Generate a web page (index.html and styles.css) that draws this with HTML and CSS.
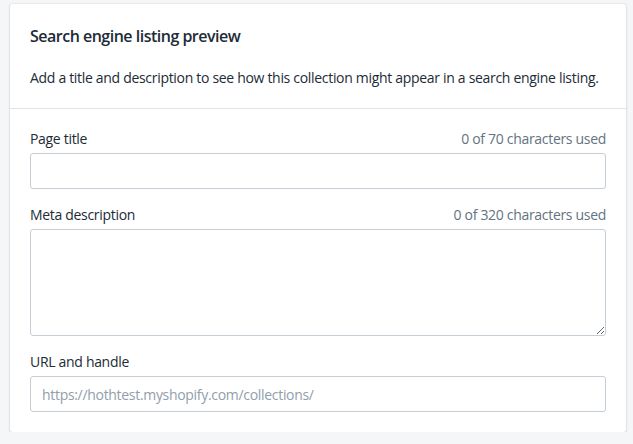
FILE: index.html
```html
<!DOCTYPE html>
<html lang="en">
<head>
<meta charset="utf-8">
<title>Search engine listing preview</title>
<link rel="stylesheet" href="styles.css">
</head>
<body>
<div class="card">
  <div class="card-section intro">
    <h2 class="card-title">Search engine listing preview</h2>
    <p class="card-text">Add a title and description to see how this collection might appear in a search engine listing.</p>
  </div>
  <div class="card-section form">
    <div class="field">
      <div class="label-row"><label class="label" for="t">Page title</label><span class="count">0 of 70 characters used</span></div>
      <input class="input" id="t" type="text">
    </div>
    <div class="field">
      <div class="label-row"><label class="label" for="d">Meta description</label><span class="count">0 of 320 characters used</span></div>
      <textarea class="input textarea" id="d"></textarea>
    </div>
    <div class="field">
      <div class="label-row"><label class="label" for="u">URL and handle</label></div>
      <input class="input" id="u" type="text" placeholder="https://hothtest.myshopify.com/collections/">
    </div>
  </div>
</div>
</body>
</html>
```
FILE: styles.css
```css
html, body {
  margin: 0;
  padding: 0;
  background: #f4f6f8;
}
body {
  padding: 4px 7px 0 10px;
  font-family: "Open Sans", "Noto Sans", sans-serif;
  color: #212b36;
  font-size: 14px;
  line-height: 20px;
  letter-spacing: -0.31px;
}
.card {
  background: #fff;
  border-radius: 3px;
  box-shadow: 0 0 0 1px rgba(63,63,68,0.05), 0 1px 3px 0 rgba(63,63,68,0.15);
}
.card-section {
  padding: 20px;
}
.intro {
  border-bottom: 1px solid #dfe3e8;
}
.card-title {
  margin: 0 0 20px;
  font-size: 16px;
  line-height: 24px;
  font-weight: 600;
  letter-spacing: -0.5px;
}
.card-text {
  margin: 0;
}
.form {
  display: flex;
  flex-direction: column;
  gap: 16px;
}
.field {
  display: flex;
  flex-direction: column;
  gap: 4px;
}
.label-row {
  display: flex;
  justify-content: space-between;
}
.count {
  color: #637381;
}
.input {
  box-sizing: border-box;
  width: 100%;
  height: 36px;
  margin: 0;
  padding: 7px 11px;
  border: 1px solid #c4cdd5;
  border-radius: 3px;
  font: inherit;
  letter-spacing: inherit;
  color: #212b36;
  background: #fff;
  outline: none;
}
.input::placeholder {
  color: #919eab;
}
.textarea {
  height: 107px;
  display: block;
  resize: vertical;
}
```
